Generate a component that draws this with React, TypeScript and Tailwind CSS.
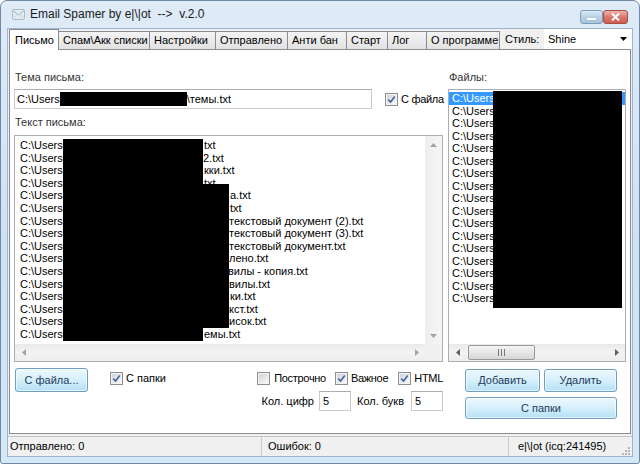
import React from 'react';

type Tab = { label: string; w: string; active?: boolean };

const TABS: Tab[] = [
  { label: 'Письмо', w: 'w-[50px]', active: true },
  { label: 'Спам\\Акк списки', w: 'w-[91px]' },
  { label: 'Настройки', w: 'w-[66px]' },
  { label: 'Отправлено', w: 'w-[72px]' },
  { label: 'Анти бан', w: 'w-[59px]' },
  { label: 'Старт', w: 'w-[41px]' },
  { label: 'Лог', w: 'w-[39px]' },
  { label: 'О программе', w: 'w-[73px]' },
];

// visible tails of the redacted paths, pad = where the tail starts
const LINES = [
  { pad: 'w-[184px]', tail: 'txt' },
  { pad: 'w-[183px]', tail: '2.txt' },
  { pad: 'w-[184px]', tail: 'кки.txt' },
  { pad: 'w-[184px]', tail: 'txt' },
  { pad: 'w-[210px]', tail: 'а.txt' },
  { pad: 'w-[210px]', tail: 'txt' },
  { pad: 'w-[209px]', tail: 'текстовый документ (2).txt' },
  { pad: 'w-[209px]', tail: 'текстовый документ (3).txt' },
  { pad: 'w-[209px]', tail: 'текстовый документ.txt' },
  { pad: 'w-[209px]', tail: 'лено.txt' },
  { pad: 'w-[208px]', tail: 'вилы - копия.txt' },
  { pad: 'w-[209px]', tail: 'вилы.txt' },
  { pad: 'w-[210px]', tail: 'ки.txt' },
  { pad: 'w-[209px]', tail: 'кст.txt' },
  { pad: 'w-[209px]', tail: 'исок.txt' },
  { pad: 'w-[184px]', tail: 'емы.txt' },
];

const FILES = Array.from({ length: 17 }, (_, i) => i);

function Check({ checked }: { checked?: boolean }) {
  return (
    <span className="inline-flex h-[13px] w-[13px] shrink-0 items-center justify-center border border-[#8e8f8f] bg-white">
      <span className="flex h-[11px] w-[11px] items-center justify-center border border-[#f2f2f2] bg-gradient-to-br from-[#d0d4da] to-[#f8f8f8]">
        {checked && (
          <svg width="9" height="9" viewBox="0 0 9 9">
            <path d="M1.2 4.6 L3.6 7 L7.8 1.4" stroke="#46639b" strokeWidth="1.6" fill="none" />
          </svg>
        )}
      </span>
    </span>
  );
}

function Arrow({ dir, color = '#a3a3a3' }: { dir: 'up' | 'down' | 'left' | 'right'; color?: string }) {
  const vertical = dir === 'up' || dir === 'down';
  const d = {
    up: 'M0 4 L3.5 0 L7 4 Z',
    down: 'M0 0 L7 0 L3.5 4 Z',
    left: 'M4 0 L4 7 L0 3.5 Z',
    right: 'M0 0 L4 3.5 L0 7 Z',
  }[dir];
  return (
    <svg width={vertical ? 7 : 4} height={vertical ? 4 : 7} viewBox={vertical ? '0 0 7 4' : '0 0 4 7'}>
      <path d={d} fill={color} />
    </svg>
  );
}

function HScroll({ thumb, arrow, className = '' }: { thumb?: boolean; arrow?: string; className?: string }) {
  return (
    <div className={`flex h-[17px] shrink-0 items-center bg-gradient-to-b from-[#e9e9e9] via-[#f3f3f3] to-[#eeeeee] ${className}`}>
      <div className="flex h-full w-[17px] items-center justify-center">
        <Arrow dir="left" color={arrow} />
      </div>
      <div className="flex h-full flex-1 items-center">
        {thumb && (
          <div className="ml-[2px] flex h-[15px] w-[67px] items-center justify-center rounded-[2px] border border-[#999999] bg-gradient-to-b from-[#f4f4f4] to-[#d8d8d8]">
            <svg width="7" height="7" viewBox="0 0 7 7">
              <path d="M0.5 0 V7 M3.5 0 V7 M6.5 0 V7" stroke="#7a7a7a" strokeWidth="1" />
            </svg>
          </div>
        )}
      </div>
      <div className="flex h-full w-[17px] items-center justify-center">
        <Arrow dir="right" color={arrow} />
      </div>
    </div>
  );
}

function Btn({ className, children }: { className: string; children: React.ReactNode }) {
  return (
    <div
      className={`flex shrink-0 items-center justify-center rounded-[3px] border border-[#6f9ec4] bg-gradient-to-b from-[#eef8fd] via-[#d6effb] to-[#b4e0f5] text-[#1d3b5c] shadow-[inset_0_0_0_1px_rgba(255,255,255,0.6)] ${className}`}
    >
      {children}
    </div>
  );
}

function Field({ className, children }: { className: string; children?: React.ReactNode }) {
  return (
    <div className={`flex shrink-0 items-center whitespace-nowrap border border-[#c8cad0] border-t-[#abadb3] bg-white ${className}`}>
      {children}
    </div>
  );
}

export default function App() {
  return (
    <div className="h-[464px] w-[640px] bg-white font-['Liberation_Sans',Arial,sans-serif] text-[11px] text-black">
      <div className="flex h-[464px] w-[640px] flex-col rounded-t-[7px] rounded-b-[3px] border border-[#6d89a6] bg-gradient-to-b from-[#dfebf7] via-[#cfe2f3] to-[#d4e8f6]">
        {/* title bar */}
        <div className="flex h-[27px] shrink-0 items-start">
          <svg className="ml-[11px] mt-[7px]" width="13" height="13" viewBox="0 0 13 13">
            <rect x="0.5" y="1.5" width="12" height="10" rx="1" fill="#e4ebf2" stroke="#a9bccf" />
            <path d="M1 2.5 L6.5 7 L12 2.5" stroke="#9fb3c7" fill="none" />
            <path d="M1.5 10.5 L5 6.5 M11.5 10.5 L8 6.5" stroke="#c2d0dd" fill="none" />
          </svg>
          <span className="ml-[5px] mt-[6px] text-[12px] leading-[15px] text-[#1b1b1b]">
            {'Email Spamer by e|\\|ot \u00a0--> \u00a0v.2.0'}
          </span>
          <div className="ml-auto mr-[11px] mt-[9px] flex">
            <div className="flex h-[14px] w-[23px] items-end justify-center rounded-[3px] border border-[#7f9cb9] bg-gradient-to-b from-[#dbe9f5] via-[#bad2e6] to-[#a7c4dc] pb-[3px]">
              <span className="h-[2px] w-[9px] bg-white shadow-[0_0_1px_#5d7a96]" />
            </div>
            <div className="flex h-[14px] w-[25px] items-center justify-center rounded-[3px] border border-[#a84c44] bg-gradient-to-b from-[#ebb4ab] via-[#d9786d] to-[#cf5c50]">
              <svg width="9" height="8" viewBox="0 0 9 8">
                <path d="M1 0.5 L8 7.5 M8 0.5 L1 7.5" stroke="white" strokeWidth="2" />
              </svg>
            </div>
          </div>
        </div>

        {/* client */}
        <div className="mx-[6px] flex flex-col border border-[#9fb5cb] bg-[#f0f0f0]">
          {/* tabs */}
          <div className="flex h-[20px] items-end">
            <div className="ml-[1px] flex items-end">
              {TABS.map((t) =>
                t.active ? (
                  <div
                    key={t.label}
                    className={`relative z-10 -mb-px flex h-[21px] items-center border border-b-0 border-[#898c95] bg-white pl-[5px] ${t.w}`}
                  >
                    {t.label}
                  </div>
                ) : (
                  <div
                    key={t.label}
                    className={`flex h-[18px] items-center whitespace-nowrap border-r border-t border-[#898c95] bg-gradient-to-b from-[#f4f4f4] to-[#e2e2e2] pl-[4px] ${t.w}`}
                  >
                    {t.label}
                  </div>
                ),
              )}
            </div>
            <span className="ml-[5px] self-center">Стиль:</span>
            <div className="ml-auto flex h-[20px] w-[88px] items-center justify-between bg-white pl-[4px] pr-[5px]">
              <span>Shine</span>
              <svg width="7" height="4" viewBox="0 0 7 4">
                <path d="M0 0 L7 0 L3.5 4 Z" fill="#000" />
              </svg>
            </div>
          </div>

          {/* tab page */}
          <div className="ml-[1px] flex h-[385px] w-[622px] border border-[#898c95] bg-white pl-[4px] pt-[20px]">
            {/* left column */}
            <div className="flex w-[429px] shrink-0 flex-col">
              <div className="h-[14px] pl-[1px] leading-[14px] text-[#333]">Тема письма:</div>
              <div className="mt-[5px] flex h-[20px] items-center whitespace-nowrap">
                <Field className="h-[20px] w-[358px] pl-[2px]">
                  <span>C:\Users</span>
                  <span className="inline-block h-[14px] w-[127px] bg-black" />
                  <span>\темы.txt</span>
                </Field>
                <span className="ml-[13px] flex"><Check checked /></span>
                <span className="ml-[3px] tracking-[-0.3px]">С файла</span>
              </div>
              <div className="mt-[6px] h-[14px] pl-[1px] leading-[14px] text-[#333]">Текст письма:</div>

              <div className="mt-[6px] flex h-[227px] shrink-0 flex-col border border-[#abadb3] bg-white">
                <div className="flex min-h-0 flex-1">
                  <div className="relative flex-1 overflow-hidden pl-[5px] pt-[3px] leading-[12.6px]">
                    {LINES.map((l, i) => (
                      <div key={i} className="flex whitespace-nowrap">
                        <span className={`inline-block shrink-0 ${l.pad}`}>C:\Users</span>
                        <span>{l.tail}</span>
                      </div>
                    ))}
                    <div className="absolute left-[48px] top-[3px] h-[202px] w-[140px] bg-black" />
                    <div className="absolute left-[188px] top-[48px] h-[144px] w-[26px] bg-black" />
                  </div>
                  <div className="flex w-[17px] flex-col bg-gradient-to-r from-[#eeeeee] to-[#f6f6f6]">
                    <div className="flex h-[17px] items-center justify-center">
                      <Arrow dir="up" />
                    </div>
                    <div className="flex-1" />
                    <div className="flex h-[17px] items-center justify-center">
                      <Arrow dir="down" />
                    </div>
                  </div>
                </div>
                <div className="flex h-[17px]">
                  <HScroll className="flex-1" />
                  <div className="w-[17px] bg-[#f0f0f0]" />
                </div>
              </div>

              {/* bottom controls */}
              <div className="mt-[6px] flex whitespace-nowrap">
                <Btn className="ml-[1px] h-[24px] w-[73px]">С файла...</Btn>
                <div className="ml-[22px] mt-[4px] flex h-[13px] items-center">
                  <Check checked />
                  <span className="ml-[3px]">С папки</span>
                </div>
                <div className="ml-auto flex flex-col items-end">
                  <div className="mt-[4px] flex h-[13px] items-center tracking-[-0.3px]">
                    <Check />
                    <span className="ml-[4px]">Построчно</span>
                    <span className="ml-[9px] flex"><Check checked /></span>
                    <span className="ml-[3px]">Важное</span>
                    <span className="ml-[10px] flex"><Check checked /></span>
                    <span className="ml-[3px]">HTML</span>
                  </div>
                  <div className="mt-[6px] flex h-[20px] items-center">
                    <span>Кол. цифр</span>
                    <Field className="ml-[5px] h-[20px] w-[32px] pl-[3px]">5</Field>
                    <span className="ml-[6px]">Кол. букв</span>
                    <Field className="ml-[7px] h-[20px] w-[32px] pl-[3px]">5</Field>
                  </div>
                </div>
              </div>
            </div>

            {/* right column */}
            <div className="ml-[5px] flex w-[178px] shrink-0 flex-col">
              <div className="h-[14px] pl-[1px] leading-[14px] text-[#333]">Файлы:</div>
              <div className="mt-[5px] flex h-[273px] shrink-0 flex-col border border-[#abadb3] bg-white">
                <div className="relative min-h-0 flex-1 overflow-hidden pt-[2px] leading-[12.5px]">
                  {FILES.map((i) => (
                    <div key={i} className={i === 0 ? 'bg-[#3399ff] pl-[3px] text-white' : 'pl-[3px]'}>
                      C:\Users
                    </div>
                  ))}
                  <div className="absolute left-[44px] top-[1px] h-[217px] w-[129px] bg-black" />
                </div>
                <HScroll thumb arrow="#606060" />
              </div>
              <div className="ml-[17px] mt-[7px] flex">
                <Btn className="h-[23px] w-[75px]">Добавить</Btn>
                <Btn className="ml-[4px] h-[23px] w-[73px]">Удалить</Btn>
              </div>
              <Btn className="ml-[17px] mt-[5px] h-[22px] w-[152px]">С папки</Btn>
            </div>
          </div>

          {/* status bar */}
          <div className="mt-[2px] flex h-[20px] items-center border-t border-[#c5c5c5] bg-[#f0f0f0]">
            <div className="flex h-full w-[254px] items-center border-r border-[#c9c9c9] pl-[2px]">Отправлено: 0</div>
            <div className="flex h-full w-[247px] items-center border-r border-[#c9c9c9] pl-[6px]">Ошибок: 0</div>
            <div className="flex h-full flex-1 items-center pl-[9px]">e|\|ot (icq:241495)</div>
            <svg className="mr-[2px] mt-[8px]" width="9" height="9" viewBox="0 0 9 9">
              <g fill="#b5b5b5">
                <rect x="7" y="1" width="2" height="2" />
                <rect x="4" y="4" width="2" height="2" />
                <rect x="7" y="4" width="2" height="2" />
                <rect x="1" y="7" width="2" height="2" />
                <rect x="4" y="7" width="2" height="2" />
                <rect x="7" y="7" width="2" height="2" />
              </g>
            </svg>
          </div>
        </div>
      </div>
    </div>
  );
}
